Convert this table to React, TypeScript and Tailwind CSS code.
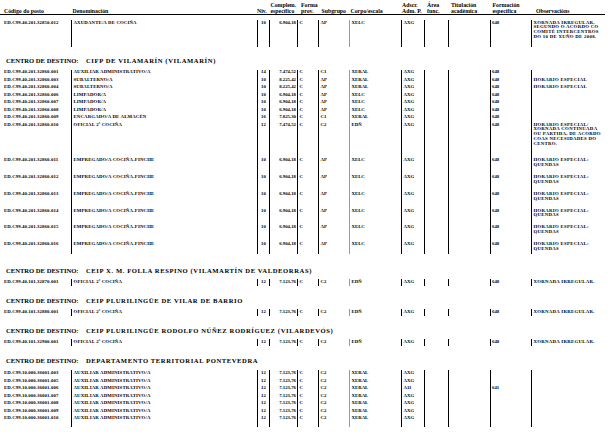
import React from "react";

type Row = {
  code: string;
  denom: string;
  niv: string;
  comp: string;
  forma?: string;
  sub: string;
  corpo: string;
  adscr: string;
  form?: string;
  obs?: string[];
  h: string;
};

const grid =
  "grid grid-cols-[71px_186px_12px_28px_21px_31px_52px_23px_24px_42px_41px_74px]";

function DataRow({ r }: { r: Row }) {
  return (
    <div className={`${grid} ${r.h} text-[4.8px] leading-[4.8px] font-bold`}>
      <div className="pl-[4px] pt-[0.7px] whitespace-nowrap tracking-[0.1px]">{r.code}</div>
      <div className="border-l border-black pl-[1.5px] pt-[0.7px] whitespace-nowrap tracking-[0.15px]">{r.denom}</div>
      <div className="border-l border-black pt-[0.7px] text-center">{r.niv}</div>
      <div className="border-l border-black pt-[0.7px] pr-[1px] text-right whitespace-nowrap">{r.comp}</div>
      <div className="border-l border-black pt-[0.7px] pl-[1.5px]">{r.forma ?? "C"}</div>
      <div className="border-l border-black pt-[0.7px] pl-[1.5px]">{r.sub}</div>
      <div className="border-l border-[#9a9a9a] pt-[0.7px] pl-[1.5px]">{r.corpo}</div>
      <div className="border-l border-black pt-[0.7px] pl-[1.5px]">{r.adscr}</div>
      <div className="border-l border-black"></div>
      <div className="border-l border-black"></div>
      <div className="border-l border-black pt-[0.7px] pl-[1px]">{r.form ?? ""}</div>
      <div className="border-l border-black pt-[0.7px] pl-[1.5px] whitespace-nowrap tracking-[0.3px]">
        {(r.obs ?? []).map((l, i) => (
          <div key={i}>{l}</div>
        ))}
      </div>
    </div>
  );
}

function Heading({ name, mt }: { name: string; mt: string }) {
  return (
    <div className={`${mt} flex h-[8px] items-center pl-[6px] text-[6.6px] leading-[8px] font-bold whitespace-nowrap`}>
      <span className="w-[80px]">CENTRO DE DESTINO:</span>
      <span className="tracking-[0.6px]">{name}</span>
    </div>
  );
}

const top: Row = {
  code: "ED.C99.40.201.32850.012",
  denom: "AXUDANTE/A DE COCIÑA",
  niv: "10",
  comp: "6.904,18",
  sub: "AP",
  corpo: "XELC",
  adscr: "AXG",
  form: "648",
  obs: ["XORNADA IRREGULAR,", "SEGUNDO O ACORDO CO", "COMITÉ INTERCENTROS", "DO 10 DE XUÑO DE 2008."],
  h: "h-[27px]",
};

const quendas = ["HORARIO ESPECIAL:", "QUENDAS"];

const vilamarin: Row[] = [
  { code: "ED.C99.40.201.32860.001", denom: "AUXILIAR ADMINISTRATIVO/A", niv: "14", comp: "7.474,52", sub: "C1", corpo: "XERAL", adscr: "AXG", form: "648", h: "h-[7.5px]" },
  { code: "ED.C99.40.201.32860.003", denom: "SUBALTERNO/A", niv: "10", comp: "8.225,42", sub: "AP", corpo: "XERAL", adscr: "AXG", form: "648", obs: ["HORARIO ESPECIAL"], h: "h-[7.5px]" },
  { code: "ED.C99.40.201.32860.004", denom: "SUBALTERNO/A", niv: "10", comp: "8.225,42", sub: "AP", corpo: "XERAL", adscr: "AXG", form: "648", obs: ["HORARIO ESPECIAL"], h: "h-[7.5px]" },
  { code: "ED.C99.40.201.32860.006", denom: "LIMPADOR/A", niv: "10", comp: "6.904,18", sub: "AP", corpo: "XELC", adscr: "AXG", form: "648", h: "h-[7.5px]" },
  { code: "ED.C99.40.201.32860.007", denom: "LIMPADOR/A", niv: "10", comp: "6.904,18", sub: "AP", corpo: "XELC", adscr: "AXG", form: "648", h: "h-[7.5px]" },
  { code: "ED.C99.40.201.32860.008", denom: "LIMPADOR/A", niv: "10", comp: "6.904,18", sub: "AP", corpo: "XELC", adscr: "AXG", form: "648", h: "h-[7.5px]" },
  { code: "ED.C99.40.201.32860.009", denom: "ENCARGADO/A DE ALMACÉN", niv: "16", comp: "7.825,30", sub: "C1", corpo: "XERAL", adscr: "AXG", form: "648", h: "h-[7.5px]" },
  { code: "ED.C99.40.201.32860.010", denom: "OFICIAL 2ª COCIÑA", niv: "12", comp: "7.474,52", sub: "C2", corpo: "EDÑ", adscr: "AXG", form: "648", obs: ["HORARIO ESPECIAL/", "XORNADA CONTINUADA", "OU PARTIDA, DE ACORDO", "COAS NECESIDADES DO", "CENTRO."], h: "h-[35.5px]" },
  { code: "ED.C99.40.201.32860.011", denom: "EMPREGADO/A COCIÑA-FINCHE", niv: "10", comp: "6.904,18", sub: "AP", corpo: "XELC", adscr: "AXG", form: "648", obs: quendas, h: "h-[16.8px]" },
  { code: "ED.C99.40.201.32860.012", denom: "EMPREGADO/A COCIÑA-FINCHE", niv: "10", comp: "6.904,18", sub: "AP", corpo: "XELC", adscr: "AXG", form: "648", obs: quendas, h: "h-[16.8px]" },
  { code: "ED.C99.40.201.32860.013", denom: "EMPREGADO/A COCIÑA-FINCHE", niv: "10", comp: "6.904,18", sub: "AP", corpo: "XELC", adscr: "AXG", form: "648", obs: quendas, h: "h-[16.8px]" },
  { code: "ED.C99.40.201.32860.014", denom: "EMPREGADO/A COCIÑA-FINCHE", niv: "10", comp: "6.904,18", sub: "AP", corpo: "XELC", adscr: "AXG", form: "648", obs: quendas, h: "h-[16.8px]" },
  { code: "ED.C99.40.201.32860.015", denom: "EMPREGADO/A COCIÑA-FINCHE", niv: "10", comp: "6.904,18", sub: "AP", corpo: "XELC", adscr: "AXG", form: "648", obs: quendas, h: "h-[16.8px]" },
  { code: "ED.C99.40.201.32860.016", denom: "EMPREGADO/A COCIÑA-FINCHE", niv: "10", comp: "6.904,18", sub: "AP", corpo: "XELC", adscr: "AXG", form: "648", obs: quendas, h: "h-[13px]" },
];

const oficial = (code: string): Row => ({
  code,
  denom: "OFICIAL 2ª COCIÑA",
  niv: "12",
  comp: "7.123,76",
  sub: "C2",
  corpo: "EDÑ",
  adscr: "AXG",
  form: "648",
  obs: ["XORNADA IRREGULAR."],
  h: "h-[6.5px]",
});

const aux = (n: string, h: string, adscr = "AXG", form = ""): Row => ({
  code: `ED.C99.10.000.36001.${n}`,
  denom: "AUXILIAR ADMINISTRATIVO/A",
  niv: "12",
  comp: "7.123,76",
  sub: "C2",
  corpo: "XERAL",
  adscr,
  form,
  h,
});

const dept: Row[] = [
  aux("003", "h-[7.5px]"),
  aux("005", "h-[7.5px]"),
  aux("006", "h-[7.5px]", "A11", "641"),
  aux("007", "h-[7.5px]"),
  aux("008", "h-[7.5px]"),
  aux("009", "h-[7.5px]"),
  aux("010", "h-[12px]"),
];

export default function App() {
  return (
    <div
      className="relative h-[439px] w-[616px] overflow-hidden bg-white text-black"
      style={{ fontFamily: '"Liberation Serif", "Times New Roman", serif' }}
    >
      {/* header */}
      <div className={`${grid} h-[15px] w-[605px] border-b border-black text-[5.8px] leading-[6px] font-bold whitespace-nowrap`}>
        <div className="flex flex-col justify-end pl-[4px]">Código do posto</div>
        <div className="flex flex-col justify-end pl-[1.5px]">Denominación</div>
        <div className="flex flex-col justify-end">Niv.</div>
        <div className="flex flex-col justify-end pl-[1.5px]">
          <div>Complem.</div>
          <div>específico</div>
        </div>
        <div className="flex flex-col justify-end pl-[4px]">
          <div>Forma</div>
          <div>prov.</div>
        </div>
        <div className="flex flex-col justify-end pl-[3.5px]">Subgrupo</div>
        <div className="flex flex-col justify-end pl-[1.5px]">Corpo/escala</div>
        <div className="flex flex-col justify-end pl-[1px]">
          <div>Adscr.</div>
          <div>Adm. P.</div>
        </div>
        <div className="flex flex-col justify-end pl-[3px]">
          <div>Área</div>
          <div>func.</div>
        </div>
        <div className="flex flex-col justify-end pl-[3px]">
          <div>Titulación</div>
          <div>académica</div>
        </div>
        <div className="flex flex-col justify-end pl-[2.5px]">
          <div>Formación</div>
          <div>específica</div>
        </div>
        <div className="flex flex-col justify-end pl-[5px]">Observacións</div>
      </div>

      <div className="mt-[5px]">
        <DataRow r={top} />
      </div>

      <Heading mt="mt-[10px]" name="CIFP DE VILAMARÍN (VILAMARÍN)" />
      <div className="mt-[4.5px]">
        {vilamarin.map((r) => (
          <DataRow key={r.code} r={r} />
        ))}
      </div>

      <Heading mt="mt-[13px]" name="CEIP X. M. FOLLA RESPINO (VILAMARTÍN DE VALDEORRAS)" />
      <div className="mt-[4px]">
        <DataRow r={oficial("ED.C99.40.101.32870.001")} />
      </div>

      <Heading mt="mt-[11.5px]" name="CEIP PLURILINGÜE DE VILAR DE BARRIO" />
      <div className="mt-[4px]">
        <DataRow r={oficial("ED.C99.40.101.32880.001")} />
      </div>

      <Heading mt="mt-[11.5px]" name="CEIP PLURILINGÜE RODOLFO NÚÑEZ RODRÍGUEZ (VILARDEVÓS)" />
      <div className="mt-[4px]">
        <DataRow r={oficial("ED.C99.40.101.32900.001")} />
      </div>

      <Heading mt="mt-[11px]" name="DEPARTAMENTO TERRITORIAL PONTEVEDRA" />
      <div className="mt-[5.5px]">
        {dept.map((r) => (
          <DataRow key={r.code} r={r} />
        ))}
      </div>
    </div>
  );
}
